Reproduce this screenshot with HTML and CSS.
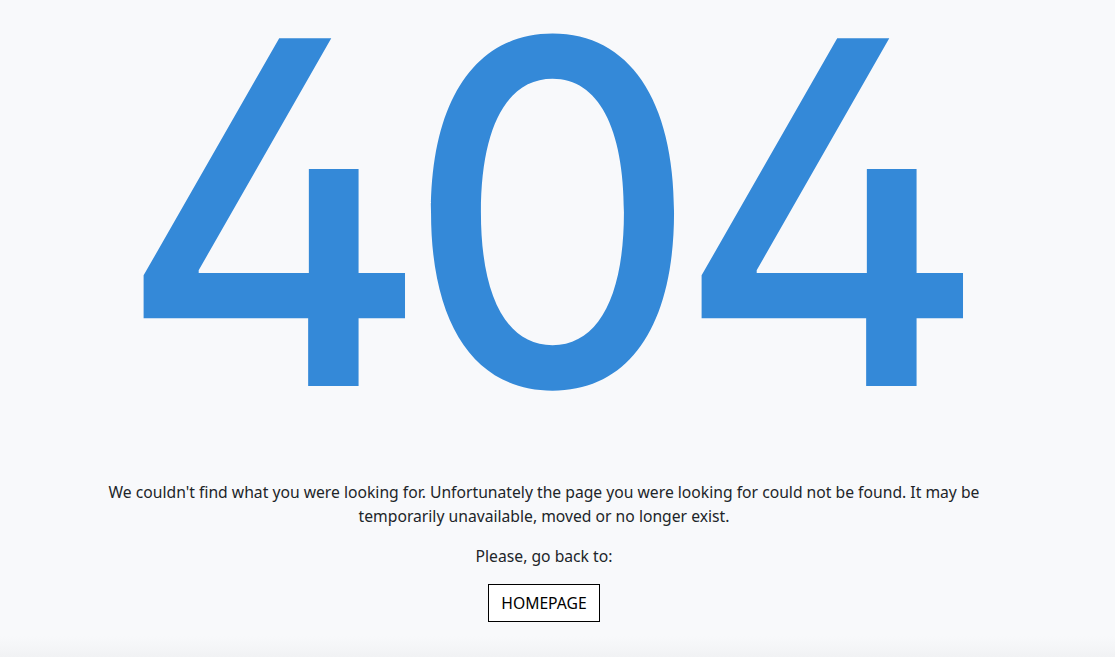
FILE: index.html
```html
<!DOCTYPE html>
<html lang="en">
<head>
<meta charset="utf-8">
<title>404</title>
<link rel="stylesheet" href="styles.css">
</head>
<body>
<main class="page">
  <h1 class="code"><span class="digit four">4</span><span class="digit zero">0</span><span class="digit four">4</span></h1>
  <div class="message">
    <p class="lead">We couldn't find what you were looking for. Unfortunately the page you were looking for could not be found. It may be temporarily unavailable, moved or no longer exist.</p>
    <p class="back">Please, go back to:</p>
    <p class="action"><a class="btn" href="#">HOMEPAGE</a></p>
  </div>
</main>
</body>
</html>
```
FILE: styles.css
```css
html, body {
  margin: 0;
  padding: 0;
}
body {
  background: linear-gradient(to bottom, #f8f9fb 0, #f8f9fb 636px, #f1f2f4 657px);
  color: #212529;
  font-family: "Noto Sans", "DejaVu Sans", sans-serif;
  font-size: 15.7px;
  line-height: 24px;
  height: 657px;
  overflow: hidden;
}
.page {
  padding-top: 21px;
}
.code {
  margin: 0;
  display: flex;
  justify-content: center;
  padding-right: 44px;
  font-family: "Inter", "DejaVu Sans", sans-serif;
  font-feature-settings: "cv02" 1;
  font-weight: 500;
  font-size: 478px;
  line-height: 0.8;
  color: #3489d8;
}
.digit {
  display: block;
  width: 279px;
  text-align: center;
}
.zero {
  transform: translateX(3px) scaleX(0.95);
}
.message {
  margin-top: 77px;
  text-align: center;
  padding: 0 100px 0 73px;
}
.message p {
  margin: 0 0 16px;
}
.btn {
  display: inline-block;
  border: 1px solid #000;
  padding: 6px 12px;
  color: #000;
  text-decoration: none;
  background: #fff;
}
```
